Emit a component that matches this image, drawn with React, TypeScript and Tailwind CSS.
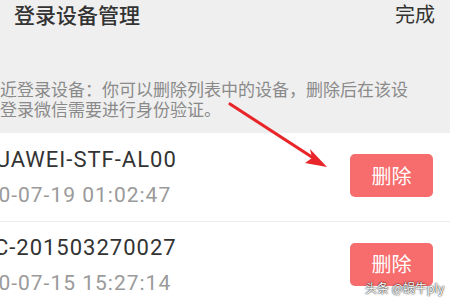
import React from "react";

const cjk = { fontFamily: '"Noto Sans CJK SC", "Noto Sans", sans-serif' };
const latin = { fontFamily: 'Roboto, "Noto Sans CJK SC", sans-serif' };

function Row({ name, date, first }: { name: string; date: string; first?: boolean }) {
  return (
    <div className={`flex items-center justify-between h-[88px] pr-[17px] ${first ? "" : "border-t border-[#ececec]"}`}>
      <div className="flex flex-col ml-[-21px] whitespace-nowrap" style={latin}>
        <div className="text-[22px] leading-[30px] tracking-[1px] text-[#333333]">{name}</div>
        <div className="text-[21px] leading-[30px] mt-[5px] ml-[-19px] tracking-[1px] text-[#9a9a9a]">{date}</div>
      </div>
      <div
        className="w-[83px] h-[43px] mt-[-3px] rounded-[5px] bg-[#f76c6c] flex items-center justify-center text-white text-[20px]"
        style={cjk}
      >
        删除
      </div>
    </div>
  );
}

export default function App() {
  return (
    <div className="relative w-[450px] h-[300px] overflow-hidden bg-[#efefef]" style={cjk}>
      <div className="flex justify-between items-center px-[14px] pr-[15px] h-[28px]">
        <div className="text-[21px] font-medium text-[#333333] leading-[28px]">登录设备管理</div>
        <div className="text-[20px] text-[#333333] leading-[28px]">完成</div>
      </div>
      <div className="pt-[51px] h-[105px] text-[17px] leading-[20px] text-[#8a8a8a] whitespace-nowrap">
        <div>近登录设备：你可以删除列表中的设备，删除后在该设</div>
        <div>登录微信需要进行身份验证。</div>
      </div>
      <div className="bg-white">
        <Row name="HUAWEI-STF-AL00" date="2020-07-19 01:02:47" first />
        <Row name="PC-201503270027" date="2020-07-15 15:27:14" />
      </div>
      <svg className="absolute left-0 top-0" width="450" height="300" viewBox="0 0 450 300">
        <line x1="230" y1="104" x2="318" y2="161" stroke="#e8262a" strokeWidth="3.2" strokeLinecap="round" />
        <polygon points="327,167 305,163 312,158 310,149" fill="#e8262a" />
      </svg>
      <div
        className="absolute left-[365px] top-[280px] whitespace-nowrap text-[12px] leading-[16px] text-white"
        style={{ textShadow: "0 0 2px rgba(0,0,0,0.8), 0 0 1px rgba(0,0,0,0.8)" }}
      >
        头条 @蜗牛ply
      </div>
    </div>
  );
}
